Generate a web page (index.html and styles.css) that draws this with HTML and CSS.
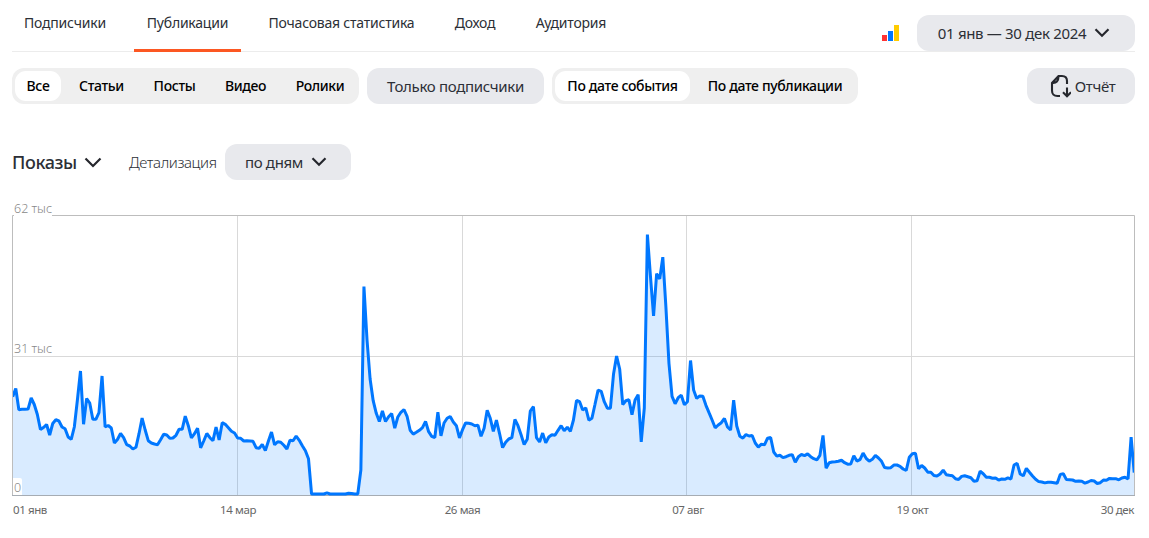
FILE: index.html
```html
<!DOCTYPE html>
<html lang="ru">
<head>
<meta charset="utf-8">
<title>Статистика</title>
<link rel="stylesheet" href="styles.css">
</head>
<body>
<main class="page">
  <header class="header">
    <nav class="tabs">
      <a class="tab tab-subs"><span>Подписчики</span></a>
      <a class="tab tab-pubs tab-active"><span>Публикации</span></a>
      <a class="tab tab-hours"><span>Почасовая статистика</span></a>
      <a class="tab tab-income"><span>Доход</span></a>
      <a class="tab tab-audience"><span>Аудитория</span></a>
    </nav>
    <div class="header-tools">
      <svg class="metrica" width="17" height="16" viewBox="0 0 17 16"><path fill="#ff3333" d="M0 10h5v6H0z"/><path fill="#0077ff" d="M6 6h5v10H6z"/><path fill="#ffcc00" d="M12 0h5v16h-5z"/></svg>
      <button class="button period"><span>01 янв — 30 дек 2024</span><svg class="chevron" width="16" height="10" viewBox="0 0 16 10"><path d="M1.500 1.200 8 7.700l6.500-6.500"/></svg></button>
    </div>
  </header>
  <section class="filters">
    <div class="segment kinds">
      <span class="option option-all option-on">Все</span><span class="option option-articles">Статьи</span><span class="option option-posts">Посты</span><span class="option option-video">Видео</span><span class="option option-clips">Ролики</span>
    </div>
    <button class="button only-subs"><span>Только подписчики</span></button>
    <div class="segment dates">
      <span class="option option-event option-on">По дате события</span><span class="option option-pubdate">По дате публикации</span>
    </div>
    <button class="button report"><svg class="report-icon" width="22" height="24" viewBox="0 0 22 24"><path d="M11 22H8.500Q3 22 3 16.500V9L9.500 2H13Q18 2 18 7V10M3.200 8.800Q9.500 9.500 9.500 2.500M18 13.500V22M14 18.300l4 3.900 4-3.900"/></svg><span>Отчёт</span></button>
  </section>
  <section class="detail">
    <span class="metric">Показы</span>
    <svg class="chevron metric-chevron" width="18" height="11" viewBox="0 0 18 11"><path d="M1.500 1.500 9 9l7.500-7.500"/></svg>
    <span class="detail-label">Детализация</span>
    <button class="button step"><span>по дням</span><svg class="chevron" width="16" height="10" viewBox="0 0 16 10"><path d="M1.500 1.200 8 7.700l6.500-6.500"/></svg></button>
  </section>
  <section class="chart">
    <svg class="plot" width="1123" height="301" viewBox="12 200 1123 301">
      <g class="grid">
        <path class="grid-line" d="M237.500 216V495M462.500 216V495M686.500 216V495M911.500 216V495M13 356.500H1134"/>
      </g>
      <path id="area" class="area"/>
      <path class="baseline" d="M12 495.500H1135"/>
      <path id="line" class="line"/>
      <path class="frame" d="M12.500 495V215.500H1134.500V495"/>
      <path class="label-bg" d="M14 207h38v9q0 1-1 1h-36q-1 0-1-1zM13 478h7q2 0 2 2v15h-9z"/>
      <g class="y-labels"><text x="14" y="213">62 тыс</text><text x="14" y="353">31 тыс</text><text x="14" y="492">0</text></g>
    </svg>
    <div class="x-labels"><span>01 янв</span><span>14 мар</span><span>26 мая</span><span>07 авг</span><span>19 окт</span><span>30 дек</span></div>
  </section>
</main>
<script src="chart.js"></script>
</body>
</html>
```
FILE: styles.css
```css
* { box-sizing: border-box; }
body { margin: 0; background: #fff; color: #2c2f36; font-family: "Noto Sans", "Open Sans", sans-serif; overflow: hidden; }
.page { width: 1149px; height: 538px; padding: 0 14px 0 12px; }
.header { height: 52px; display: flex; justify-content: space-between; border-bottom: 1px solid #ececec; }
.tabs { display: flex; gap: 16px; }
.tab { height: 52px; padding-top: 13px; font-size: 14px; line-height: 20px; letter-spacing: -.22px; text-align: center; white-space: nowrap; border-bottom: 3px solid transparent; }
.tab-active { border-color: #fc5722; }
.tab-subs { width: 106px; }
.tab-pubs { width: 107px; }
.tab-hours { width: 169px; }
.tab-income { width: 66px; }
.tab-audience { width: 94px; }
.header-tools { display: flex; align-items: flex-start; padding-top: 15px; gap: 18px; }
.metrica { margin-top: 10px; }
.button { height: 36px; padding: 0; border: 0; border-radius: 12px; background: #e8e9ed; color: #2c2f36; font: 15px/36px "Noto Sans", "Open Sans", sans-serif; letter-spacing: -.32px; display: flex; align-items: center; justify-content: center; white-space: nowrap; }
.chevron { fill: none; stroke: #25272d; stroke-width: 2.200; }
.period { width: 218px; gap: 8px; padding-right: 4px; font-size: 15px; }
.filters { margin-top: 16px; display: flex; gap: 8px; }
.segment { height: 36px; padding: 3px; border-radius: 12px; background: #efefef; display: flex; }
.option { height: 30px; border-radius: 11px; text-align: center; font-size: 14px; font-weight: 500; line-height: 30px; letter-spacing: -.35px; color: #000; white-space: nowrap; }
.option-on { background: #fff; }
.kinds { width: 347px; }
.option-all { width: 46px; }
.option-articles { width: 81px; }
.option-posts { width: 65px; }
.option-video { width: 77px; }
.option-clips { width: 72px; }
.only-subs { width: 177px; }
.dates { width: 306px; }
.option-event { width: 135px; }
.option-pubdate { width: 165px; padding-left: 5px; }
.report { width: 108px; margin-left: auto; gap: 4px; padding-left: 2px; }
.report-icon { fill: none; stroke: #25272d; stroke-width: 2.100; }
.detail { margin-top: 40px; height: 36px; display: flex; align-items: center; }
.metric { width: 72px; font-size: 18px; font-weight: 500; letter-spacing: -.4px; white-space: nowrap; }
.detail-label { width: 88px; margin: 0 8px 0 27px; font-size: 15px; font-weight: 350; letter-spacing: -.4px; white-space: nowrap; }
.step { width: 126px; gap: 8px; padding-right: 4px; }
.chart { margin-top: 20px; }
.plot { display: block; width: 1123px; height: 301px; }
.grid-line { fill: none; stroke: #d9d9d9; }
.frame { fill: none; stroke: #bdbdbd; }
.baseline { stroke: #a6acb3; }
.area { fill: #0077ff; fill-opacity: .15; }
.line { fill: none; stroke: #0077ff; stroke-width: 3; stroke-linejoin: bevel; }
.label-bg { fill: #fff; }
.y-labels { fill: #888; font-size: 12.500px; font-weight: 300; }
.x-labels { display: grid; grid-template-columns: 113px 224px 225px 226px 223px 1fr; padding: 0 1px; font-size: 11.500px; line-height: 18px; letter-spacing: -.4px; color: #666; text-align: center; white-space: nowrap; }
.x-labels span:first-child { text-align: left; }
.x-labels span:last-child { text-align: right; }
```
FILE: chart.js
```javascript
// Daily values as vertical plot coordinates, 1 January to 30 December.
const days = [
396.7,388.5,409.7,409.3,409.3,409,398,404.5,414.5,429.5,427.5,424.5,435,423.5,419.7,421,427,428.7,437,439.3,427,400,371,424.2,398.5,403,419.3,419.3,412.7,376,427,425.5,428,443,439.5,433.5,437.7,444.7,446,449,447.3,433.7,418,430,440.7,443,444,444.7,439.7,434.3,435,438.3,438,435.3,429.3,429.3,416.2,425.7,438,433.7,428.3,447.8,441,433.5,437.7,440.7,427.2,440,422.7,424.3,427.7,431.3,433,438,438.3,441,440.7,441,441.3,447.7,448.4,444.3,450.6,441,432,444.8,441.7,442.3,445.3,449,440.3,440.7,436,440.3,445.7,450.7,458.7,
494,494,494,494,494,492.9,494,494,494,494,494,494,493.2,493.5,494,494,470,286.500,340,379,400.7,413.3,
421.5,411,421.5,416.7,413.5,428.2,417,412.3,409.5,416.3,430.3,434.1,432.3,430.3,427.7,421.4,431.7,436.3,437.6,412.2,435.8,423,418.3,416.5,422,425.7,437.9,429.7,422.9,423.3,424,425.7,425.1,436.3,428.3,410.2,418.3,431.3,420.1,433.3,447.6,442.3,439,437.7,419.4,425.7,434.7,444.6,439.3,411,406.7,437.7,442,433.1,442.9,437,434.8,435.3,
430.3,425.7,430.7,427.2,431.3,420,400.5,401.7,410.1,407.9,420.1,418.3,404.3,390.1,391.3,401.7,408.2,408.2,374.3,356,369,404.6,400.7,399.8,414.6,400,394.7,441.9,408,234.5,276.7,315.9,273.7,278.9,257.2,306.7,363.3,396.3,403.7,397.7,395.2,404.7,401.7,360.5,390,398.4,395.9,396.3,405.3,412.7,420,427.8,425,422.7,418.4,427,430,400.2,426,436.3,
438.1,434.6,436,435.5,443,447.1,444.2,444.8,438.2,437.5,452,456.1,455.3,457.6,456.7,455.3,454.6,462.3,456.7,454.5,455.6,453.9,456.7,458.7,459.9,455.3,435.5,468.2,462.7,462,461.7,461.3,460.3,462.7,464.2,464,455.7,461,459.7,453.1,458.3,461.2,459.3,455.3,458,461.3,467.6,468,467.7,465.1,465,466.3,469,470.5,457.3,453.8,453.2,468.7,465.5,468,472.2,472.3,
475.5,476,474,470.1,474.7,475.3,475.7,478.7,479.5,476.4,475.7,476.7,477.7,481.2,480.7,471.3,473.7,477.2,477.3,478.3,478,480.1,479,479.3,477.9,479,465,463.3,474,475.8,468.4,472.3,476,479.3,481.6,482,482.9,482.3,482.3,482.7,483.2,474.4,473.8,479.6,479.7,480,481.3,481,481.3,483.1,482,480.5,481,483.5,482.7,480.1,480.3,478.4,478.7,478.7,479.8,478,477.2,479,437.2,472.5
];
const left = 12.7;
const dayWidth = 1121.5 / (days.length - 1);
const points = days.map((y, i) => (left + i * dayWidth).toFixed(2) + ' ' + y);
const path = 'M' + points.join('L');
document.getElementById('line').setAttribute('d', path);
document.getElementById('area').setAttribute('d', path + 'V495H12.5Z');
```
